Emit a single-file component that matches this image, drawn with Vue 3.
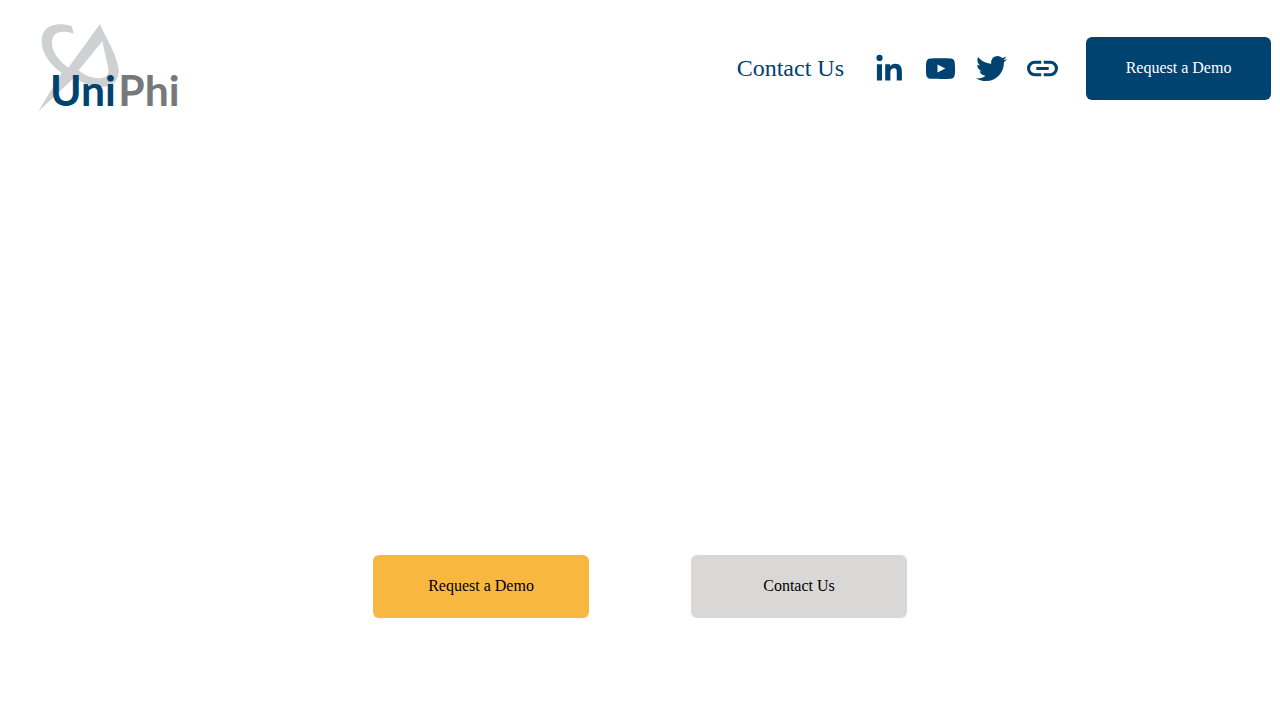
<script setup>
const socials = [
  {
    name: 'LinkedIn',
    href: '#linkedin',
    path: 'M19 27.500H24.300V44.300H19z M21.700 17.900a3.200 3.200 0 1 0 0 6.400 3.200 3.200 0 0 0 0-6.400z M27.600 27.500h5.100v2.300h.1c.7-1.300 2.500-2.700 5.100-2.700 5.400 0 6.900 3.500 6.900 8.200v9h-5.300v-8.100c0-2.100 0-4.500-2.700-4.500-2.800 0-3.900 2-3.900 4.300v8.300h-5.300z'
  },
  {
    name: 'YouTube',
    href: '#youtube',
    path: 'M46.700 26s-.3-2.100-1.200-3c-1.100-1.200-2.400-1.200-3-1.300C38.600 21.500 32 21.500 32 21.500s-6.600 0-10.500.2c-.6.1-1.900.1-3 1.300-.9.900-1.200 3-1.200 3S17 28.600 17 31.100v2.400c0 2.400.3 4.900.3 4.900s.3 2.100 1.200 3c1.100 1.200 2.600 1.200 3.300 1.300 2.400.2 10.200.3 10.200.3s6.600 0 10.500-.3c.6-.1 1.900-.1 3-1.300.9-.9 1.200-3 1.200-3s.3-2.400.3-4.900v-2.400c0-2.500-.3-5.100-.3-5.100zM28.900 36.200v-8.400l8.100 4.200-8.100 4.200z'
  },
  {
    name: 'Twitter',
    href: '#twitter',
    path: 'M48 22.100c-1.200.5-2.400.9-3.800 1 1.400-.8 2.400-2.100 2.900-3.600-1.300.8-2.700 1.300-4.200 1.600C41.700 19.800 40 19 38.200 19c-3.600 0-6.600 2.900-6.600 6.600 0 .5.1 1 .2 1.500-5.500-.3-10.300-2.900-13.500-6.900-.6 1-.9 2.100-.9 3.300 0 2.300 1.200 4.300 2.900 5.500-1.100 0-2.100-.3-3-.8v.1c0 3.200 2.300 5.800 5.300 6.400-.6.1-1.100.2-1.700.2-.4 0-.8 0-1.200-.1.8 2.600 3.300 4.500 6.100 4.600-2.200 1.800-5.100 2.800-8.200 2.800-.5 0-1.100 0-1.600-.1 2.900 1.900 6.400 2.900 10.100 2.900 12.100 0 18.700-10 18.700-18.700v-.8c1.300-1 2.400-2.100 3.200-3.400z'
  },
  {
    name: 'Website',
    href: '#website',
    path: 'M24 24H30.700v3.200H24a4.800 4.800 0 0 0 0 9.600H30.700v3.200H24a8 8 0 0 1 0-16zM33.300 24H40a8 8 0 0 1 0 16H33.300v-3.200H40a4.800 4.800 0 0 0 0-9.600H33.300zM25.600 30.400h12.800v3.200H25.600z'
  }
]
</script>

<template>
  <div class="page">
    <header class="header">
      <a class="brand" href="#home" aria-label="UniPhi">
        <svg class="logo" viewBox="24 24 432 276" aria-hidden="true">
          <path
            class="swoosh"
            fill-rule="evenodd"
            d="M131 36 C85 22 41 34 41 80 C41 122 74 158 101 176 L30 293 L140 190 C164 210 195 219 228 218 C260 216 274 194 272 164 C262 112 236 78 216 30 L121 161 C94 141 72 116 72 86 C72 56 98 46 137 59 Z M223 82 L152 169 C172 188 204 196 222 192 C240 188 244 176 240 158 Z"
          />
          <text class="uni" x="66" y="277">Uni</text>
          <text class="phi" x="271" y="277">Phi</text>
        </svg>
      </a>
      <div class="actions">
        <nav class="nav"><a href="#contact">Contact Us</a></nav>
        <div class="socials">
          <a v-for="item in socials" :key="item.name" :href="item.href" :aria-label="item.name">
            <svg viewBox="16 16 32 32" aria-hidden="true"><path fill-rule="evenodd" :d="item.path" /></svg>
          </a>
        </div>
        <a class="button primary" href="#demo">Request a Demo</a>
      </div>
    </header>
    <main class="hero">
      <a class="button amber" href="#demo">Request a Demo</a>
      <a class="button grey" href="#contact">Contact Us</a>
    </main>
  </div>
</template>

<style>
body {
  background: #fff;
}
</style>

<style scoped>
.page {
  min-height: 100vh;
  display: flex;
  flex-direction: column;
  font-family: "Liberation Serif", serif;
}
.header {
  display: flex;
  align-items: center;
  justify-content: space-between;
  padding: 22px 9px 22px 36px;
}
.brand,
.logo {
  display: block;
}
.logo {
  width: 144px;
  height: 92px;
}
.swoosh {
  fill: #cfd0d2;
}
.uni,
.phi {
  font-family: Lato, sans-serif;
  font-size: 128px;
  font-weight: 700;
}
.uni {
  fill: #004270;
}
.phi {
  fill: #77787a;
}
.actions {
  display: flex;
  align-items: center;
}
.nav a {
  color: #004270;
  font-size: 24px;
  line-height: 32px;
  text-decoration: none;
}
.socials {
  display: flex;
  gap: 20px;
  margin: 0 28px 0 30px;
}
.socials a,
.socials svg {
  display: block;
  width: 31px;
  height: 31px;
}
.socials svg {
  fill: #004270;
}
.button {
  display: flex;
  align-items: center;
  justify-content: center;
  box-sizing: border-box;
  min-height: 63px;
  padding: 20px 36px;
  border-radius: 6px;
  font-size: 16px;
  line-height: 20px;
  text-decoration: none;
}
.primary {
  min-width: 185px;
  background: #004270;
  color: #fff;
}
.hero {
  flex: 1;
  display: flex;
  align-items: flex-end;
  justify-content: center;
  gap: 102px;
  padding-bottom: 102px;
}
.hero .button {
  min-width: 216px;
  padding-bottom: 22px;
  color: #000;
}
.amber {
  background: #f8b73f;
}
.grey {
  background: #d9d8d6;
}
</style>
